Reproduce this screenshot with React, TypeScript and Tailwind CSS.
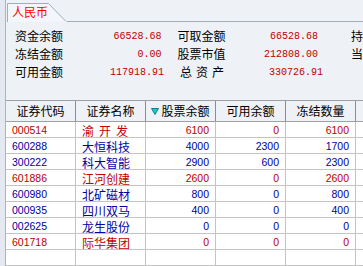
import React from "react";

const CJK = "'Noto Sans CJK SC', 'Noto Sans', sans-serif";

type Row = {
  code: string;
  name: string;
  stock: string;
  avail: string;
  frozen: string;
  red: boolean;
};

const ROWS: Row[] = [
  { code: "000514", name: "渝 开 发", stock: "6100", avail: "0", frozen: "6100", red: true },
  { code: "600288", name: "大恒科技", stock: "4000", avail: "2300", frozen: "1700", red: false },
  { code: "300222", name: "科大智能", stock: "2900", avail: "600", frozen: "2300", red: false },
  { code: "601886", name: "江河创建", stock: "2600", avail: "0", frozen: "2600", red: true },
  { code: "600980", name: "北矿磁材", stock: "800", avail: "0", frozen: "800", red: false },
  { code: "000935", name: "四川双马", stock: "400", avail: "0", frozen: "400", red: false },
  { code: "002625", name: "龙生股份", stock: "0", avail: "0", frozen: "0", red: false },
  { code: "601718", name: "际华集团", stock: "0", avail: "0", frozen: "0", red: true },
];

// three-character labels are spread over the width of four characters
function Spread({ text, width }: { text: string; width: string }) {
  return (
    <span className={`flex justify-between ${width}`}>
      {text.split(" ").map((c) => (
        <span key={c}>{c}</span>
      ))}
    </span>
  );
}

function Summary() {
  const rows = [
    ["资金余额", "66528.68", "可取金额", "66528.68", "持"],
    ["冻结金额", "0.00", "股票市值", "212808.00", "当"],
    ["可用金额", "117918.91", "总 资 产", "330726.91", ""],
  ];
  return (
    <div className="h-[82px] pt-[5px]">
      {rows.map((r, i) => (
        <div key={i} className="flex h-[18px] items-center text-[12px] text-black">
          <span className="ml-[9px] w-[60px]" style={{ fontFamily: CJK }}>
            {r[0]}
          </span>
          <span className="w-[89px] text-right text-[10px] text-[#c00000] font-['Liberation_Mono',monospace]">
            {r[1]}
          </span>
          <span className="ml-[16px] w-[60px]" style={{ fontFamily: CJK }}>
            {r[2].includes(" ") ? <Spread text={r[2]} width="w-[44px]" /> : r[2]}
          </span>
          <span className="w-[83px] text-right text-[10px] text-[#c00000] font-['Liberation_Mono',monospace]">
            {r[3]}
          </span>
          <span className="ml-[33px]" style={{ fontFamily: CJK }}>
            {r[4]}
          </span>
        </div>
      ))}
    </div>
  );
}

function HeaderCell({ children, sort }: { children: React.ReactNode; sort?: boolean }) {
  return (
    <div
      className="flex h-full items-center justify-center border-r border-[#8c8c8c] text-[12px] text-black"
      style={{ fontFamily: CJK }}
    >
      {sort && (
        <svg width="8" height="7" viewBox="0 0 8 7" className="mr-[2px]">
          <path d="M0.5 0.5 H7.5 L4 6.5 Z" fill="#10d0d8" stroke="#006070" strokeWidth="0.8" />
        </svg>
      )}
      {children}
    </div>
  );
}

export default function App() {
  return (
    <div className="flex h-[266px] w-[363px] overflow-hidden bg-[#eef2f7]">
      <div className="w-[6px] shrink-0 border-r border-[#a8b3c3] bg-[#e4e9f1]" />
      <div className="flex min-w-0 flex-1 flex-col">
        <div className="flex h-[22px]">
          <div className="relative ml-[1px] h-[22px] w-[60px] shrink-0">
            <svg width="60" height="22" className="absolute left-0 top-0">
              <path d="M0.5 22 V3.5 H41.5 L59 21.5" fill="#f3f6fa" stroke="#a3acb9" />
            </svg>
            <span
              className="absolute left-[5px] top-[4px] text-[12px] leading-[16px] text-[#ff0000]"
              style={{ fontFamily: CJK }}
            >
              人民币
            </span>
          </div>
          <div className="h-[22px] flex-1 border-b border-[#a3acb9]" />
        </div>

        <Summary />

        <div className="flex-1 bg-white">
          <div className="grid h-[22px] grid-cols-[70px_70px_70px_70px_70px_1fr] border-y border-[#a0a0a0] bg-[#eef1f5]">
            <HeaderCell>证券代码</HeaderCell>
            <HeaderCell>证券名称</HeaderCell>
            <HeaderCell sort>股票余额</HeaderCell>
            <HeaderCell>可用余额</HeaderCell>
            <HeaderCell>冻结数量</HeaderCell>
            <div />
          </div>
          {[...ROWS, null].map((r, i) => (
            <div
              key={i}
              className={`grid h-[16px] grid-cols-[70px_70px_70px_70px_70px_1fr] border-b border-[#c4c4c4] ${
                r?.red ? "text-[#c00000]" : "text-[#0000a0]"
              }`}
            >
              <div className="flex items-center border-r border-[#c4c4c4] pl-[6px] text-[10.5px] font-['Liberation_Sans',sans-serif]">
                {r?.code}
              </div>
              <div
                className="flex items-center border-r border-[#c4c4c4] pl-[6px] text-[12px]"
                style={{ fontFamily: CJK }}
              >
                {r && (r.name.includes(" ") ? <Spread text={r.name} width="w-[46px]" /> : r.name)}
              </div>
              <div className="flex items-center justify-end border-r border-[#c4c4c4] pr-[6px] text-[10.5px] font-['Liberation_Sans',sans-serif]">
                {r?.stock}
              </div>
              <div className="flex items-center justify-end border-r border-[#c4c4c4] pr-[6px] text-[10.5px] font-['Liberation_Sans',sans-serif]">
                {r?.avail}
              </div>
              <div className="flex items-center justify-end border-r border-[#c4c4c4] pr-[6px] text-[10.5px] font-['Liberation_Sans',sans-serif]">
                {r?.frozen}
              </div>
              <div />
            </div>
          ))}
        </div>
      </div>
    </div>
  );
}
